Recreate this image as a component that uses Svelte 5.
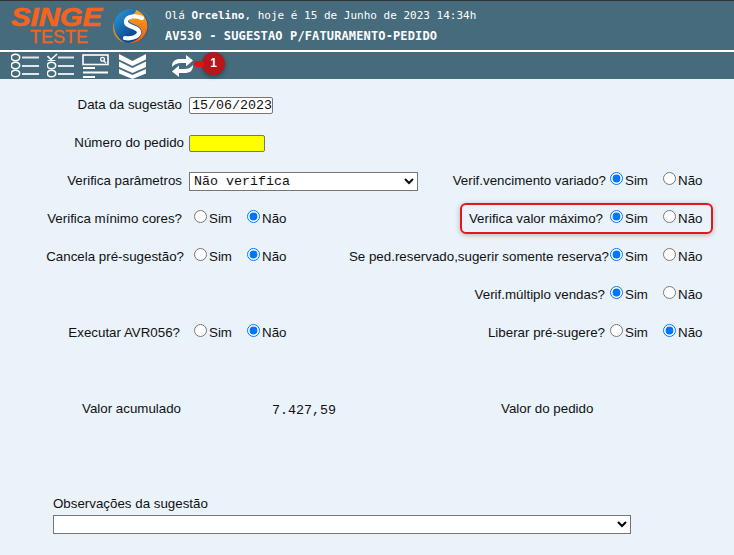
<script>
  const rows = [
    { left: 'Verifica mínimo cores?', leftVal: 'nao', lo: 1, right: 'Verifica valor máximo?', rightVal: 'sim', ro: 2, n: 'a' },
    { left: 'Cancela pré-sugestão?', leftVal: 'nao', lo: -1, right: 'Se ped.reservado,sugerir somente reserva?', rightVal: 'sim', ro: -4, n: 'b' },
    { right: 'Verif.múltiplo vendas?', rightVal: 'sim', ro: 0, n: 'c' },
    { left: 'Executar AVR056?', leftVal: 'nao', lo: 3, right: 'Liberar pré-sugere?', rightVal: 'nao', ro: 0, n: 'd' }
  ];
</script>

{#snippet radios(name, val)}
  <div class="radios">
    <label class="opt"><input type="radio" {name} checked={val === 'sim'} />Sim</label>
    <label class="opt"><input type="radio" {name} checked={val === 'nao'} />Não</label>
  </div>
{/snippet}

<div class="page">
  <header class="head">
    <div class="logo">
      <div class="brand">
        <span class="singe">SINGE</span>
        <span class="teste">TESTE</span>
      </div>
      <svg class="globe" width="44" height="42" viewBox="0 0 44 42">
        <defs>
          <linearGradient id="bl" x1="0" y1="0" x2="1" y2="1">
            <stop offset="0" stop-color="#2f9ee0" />
            <stop offset="0.6" stop-color="#0b4f96" />
            <stop offset="1" stop-color="#083a74" />
          </linearGradient>
          <linearGradient id="or" x1="0" y1="0" x2="0" y2="1">
            <stop offset="0" stop-color="#ffa31f" />
            <stop offset="1" stop-color="#e85f12" />
          </linearGradient>
        </defs>
        <path d="M5 17C2 26 6 34 15 38C9 33 6 26 5 17z" fill="#e8861c" />
        <path d="M33 6c6 3 9 9 9 15 0-6-4-11-9-15z" fill="#2f86c4" stroke="#2f86c4" stroke-width=".5" />
        <circle cx="22" cy="21" r="17" fill="url(#bl)" />
        <path d="M27 5A17 17 0 0 1 20 38C28 36 36 30 31 23 28 19 20 19 20 15 20 11 27 9 27 5z" fill="url(#or)" />
        <path d="M33 13C27 10 18 11 17 16 16 23 31 21 30 28 29 32 22 34 16 33" fill="none" stroke="#fff" stroke-width="4.200" stroke-linecap="round" />
      </svg>
    </div>
    <div class="title">
      <div>Olá <b>Orcelino</b>, hoje é 15 de Junho de 2023 14:34h</div>
      <div class="sub">AV530 - SUGESTAO P/FATURAMENTO-PEDIDO</div>
    </div>
  </header>

  <nav class="tools">
    <svg class="ic" width="29" height="25" viewBox="1 0 29 25" fill="none" stroke="#fff" stroke-width="1.6">
      <ellipse cx="5.500" cy="4.500" rx="4.200" ry="3.300" /><ellipse cx="5.500" cy="12.500" rx="4.200" ry="3.300" /><ellipse cx="5.500" cy="20.500" rx="4.200" ry="3.300" />
      <path d="M12 4.500h17M12 13h17M12 21h17" stroke="#dfe8ec" stroke-width="1.800" />
    </svg>
    <svg class="ic" width="28" height="25" viewBox="1 0 28 25" fill="none" stroke="#fff" stroke-width="1.6">
      <path d="M1.500 3l3.500 3.500 6-5.500" /><path d="M1.500 7.500h8" stroke-width="1" />
      <ellipse cx="5.500" cy="12.500" rx="4.200" ry="3.300" /><ellipse cx="5.500" cy="20.500" rx="4.200" ry="3.300" />
      <path d="M12 4.500h16M12 13h16M12 21h16" stroke="#dfe8ec" stroke-width="1.800" />
    </svg>
    <svg class="ic" width="27" height="25" viewBox="0 0 27 25" fill="none" stroke="#fff" stroke-width="1.6">
      <rect x="1" y="2" width="25" height="9.500" />
      <circle cx="20.500" cy="6.300" r="1.900" stroke-width="1.300" /><path d="M22 8l2 2" stroke-width="1.300" />
      <path d="M1 15h12M1 19.500h25M1 24h12" stroke-width="1.800" />
    </svg>
    <svg class="ic chev" width="27" height="26" viewBox="0 0 27 26" fill="#fff">
      <path d="M0 1l13.500 7L27 1v5.500L13.500 13 0 6.500z" />
      <path d="M0 8.500l13.500 6.500L27 8.500V14L13.500 20 0 14z" />
      <path d="M0 16l13.500 6L27 16v4.500L13.500 26 0 20.500z" />
    </svg>
    <svg class="ref" width="23" height="24" viewBox="0 0 23 24" fill="#fff">
      <path d="M1 13C1 6 5 5 10 5h5V1l7 5.500-7 6V9h-5c-4 0-6 1-9 4z" />
      <path d="M22 11c0 7-4 8-9 8H8v4l-7-5.500 7-6V15h5c4 0 6-1 9-4z" />
    </svg>
    <span class="badge">1</span>
  </nav>

  <main class="form">
    <label class="lab off1" for="d">Data da sugestão</label>
    <input id="d" class="date" value="15/06/2023" />
    <span></span><span></span><span></span>

    <label class="lab offn" for="n">Número do pedido</label>
    <input id="n" class="num" />
    <span></span><span></span><span></span>

    <label class="lab off1" for="p">Verifica parâmetros</label>
    <select id="p" class="sel"><option>Não verifica</option></select>
    <span class="lab rv">Verif.vencimento variado?</span>
    {@render radios('v', 'sim')}
    <span></span>

    {#each rows as r}
      <span class="lab" class:off1={r.lo === 1} class:offn={r.lo === -1} class:off3={r.lo === 3}>{r.left ?? ''}</span>
      {#if r.left}{@render radios('l' + r.n, r.leftVal)}{:else}<span></span>{/if}
      <span class="lab rl" class:off2={r.ro === 2} class:tight={r.ro === -4}>{r.right}</span>
      {@render radios('r' + r.n, r.rightVal)}
      <span></span>
    {/each}

    <div class="mark"></div>
  </main>

  <section class="vals">
    <span class="v1">Valor acumulado</span>
    <span class="v2">7.427,59</span>
    <span class="v3">Valor do pedido</span>
  </section>

  <section class="obs">
    <label for="o">Observações da sugestão</label>
    <select id="o"><option></option></select>
  </section>
</div>

<style>
  :global(body) { margin: 0; background: #eaf3fa; }
  .page { width: 734px; height: 555px; overflow: hidden; background: #eaf3fa; font: 13.33px "Liberation Sans", Arial, sans-serif; color: #111; position: relative; }
  .head { height: 49px; border-top: 1px solid #333; background: #456b7c; display: flex; color: #fff; font: 11px "DejaVu Sans Mono", monospace; }
  .logo { display: flex; width: 165px; flex: none; align-items: flex-start; padding-left: 11px; box-sizing: border-box; }
  .brand { width: 98px; flex: none; display: flex; flex-direction: column; padding-top: 7px; }
  .singe { display: block; font: italic 700 25px/18px "Liberation Sans", sans-serif; color: #f5641e; -webkit-text-stroke: .6px #f5641e; transform: scaleX(1.170); transform-origin: left center; white-space: nowrap; }
  .teste { display: block; margin: 4px 0 0 19px; font: 400 18px/14px "Liberation Sans", sans-serif; color: #f5641e; -webkit-text-stroke: .3px #f5641e; white-space: nowrap; }
  .globe { margin: 4px 0 0 0; flex: none; }
  .title { padding-top: 5px; line-height: 20px; }
  .sub { font-weight: 700; font-size: 12px; letter-spacing: .13px; }
  .tools { height: 27px; border-top: 2px solid #fff; background: #456b7c; display: flex; align-items: center; padding-left: 11px; position: relative; }
  .ic { flex: none; margin-right: 7px; }
  .ic:nth-child(3) { margin-right: 10px; }
  .chev { margin-right: 0; }
  .ref { margin-left: 25px; flex: none; }
  .badge { position: absolute; left: 202px; top: 0; width: 23px; height: 23px; border-radius: 50%; background: #b7161c; color: #fff; font: 700 12px/23px "Liberation Sans", sans-serif; text-align: center; box-shadow: 0 2px 4px rgba(0,0,0,.35); }
  .badge::before { content: ""; position: absolute; left: -8px; top: 9px; width: 10px; height: 6px; border-radius: 3px; background: #e01414; }
  .form { display: grid; grid-template-columns: 183px 267px 155px 106px 1fr; grid-auto-rows: 38px; padding-top: 6px; align-items: center; position: relative; }
  .lab { justify-self: end; white-space: nowrap; }
  .off1 { margin-right: 1px; }
  .offn { margin-right: -1px; }
  .off3 { margin-right: 3px; }
  .rl { margin-right: 0; }
  .rv { margin-right: -1px; }
  .off2 { margin-right: 2px; }
  .tight { margin-right: -4px; }
  .date { margin: 2px 0 0 6px; width: 84px; height: 17px; box-sizing: border-box; padding: 0 0 0 2px; border: 1px solid #767676; border-radius: 2px; font: 13.33px "Liberation Mono", monospace; background: #fff; color: #111; }
  .num { margin: 2px 0 0 6px; width: 76px; height: 17px; box-sizing: border-box; padding: 0; border: 1px solid #767676; border-radius: 2px; background: #ffff00; }
  .sel { margin: 3px 0 0 6px; width: 229px; height: 19px; box-sizing: border-box; font-family: "Liberation Mono", monospace; font-size: 13.33px; background: #fff; color: #111; }
  .radios { display: flex; }
  .opt { display: flex; flex: none; align-items: center; width: 53px; white-space: nowrap; }
  .opt input { margin: 0 2px 3px 5px; }
  .form > .radios { margin-left: 6px; }
  .rl + .radios, .rv + .radios { margin-left: 0; }
  .mark { position: absolute; left: 460px; top: 124px; width: 253px; height: 31px; box-sizing: border-box; border: 2px solid #e8141c; border-radius: 6px; box-shadow: 0 1px 5px rgba(60,60,60,.35); pointer-events: none; }
  .vals { display: flex; margin-top: 47px; height: 20px; align-items: center; }
  .v1 { margin-left: 82px; width: 190px; }
  .v2 { width: 229px; font: 13.33px "Liberation Mono", monospace; padding-top: 4px; }
  .obs { margin: 78px 0 0 53px; display: flex; flex-direction: column; gap: 4px; }
  .obs select { width: 578px; height: 19px; box-sizing: border-box; background: #fff; }
</style>
